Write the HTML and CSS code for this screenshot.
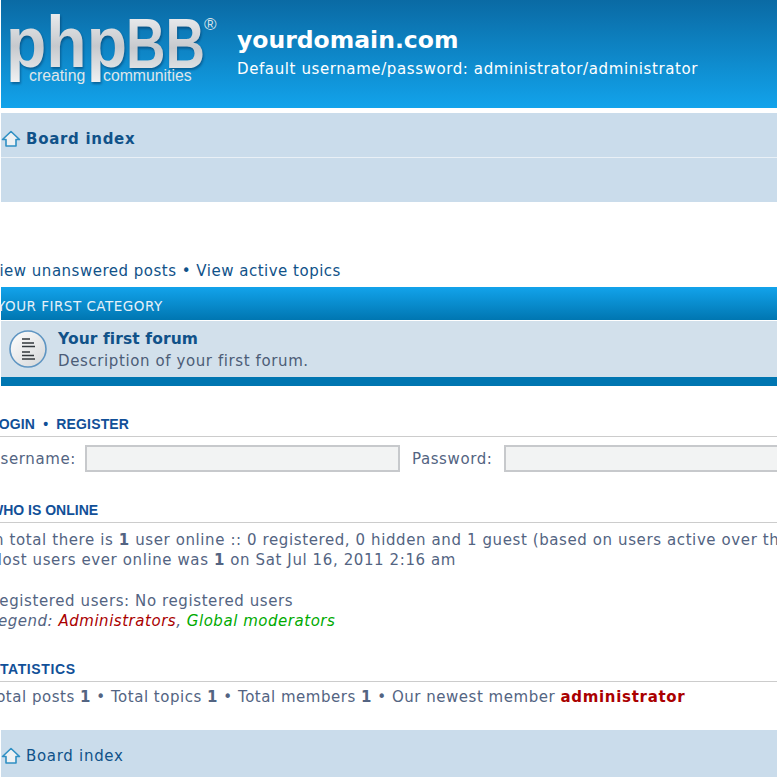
FILE: index.html
```html
<!DOCTYPE html>
<html lang="en">
<head>
    <title>yourdomain.com - Index page</title>
    <link rel="stylesheet" href="styles.css">
</head>
<body>
    <div class="headerbar">
        <svg class="logo" width="220" height="90" viewBox="0 0 220 90">
            <defs>
                <linearGradient id="logo_fill" x1="0" y1="0" x2="0" y2="1">
                    <stop offset="0" stop-color="#f6f7f8"/>
                    <stop offset="0.55" stop-color="#c6c9cd"/>
                    <stop offset="1" stop-color="#f0f1f2"/>
                </linearGradient>
            </defs>
            <text class="logo_word logo_lower" x="6" y="67" textLength="121" lengthAdjust="spacingAndGlyphs">php</text>
            <text class="logo_word logo_caps" x="126" y="68" textLength="79" lengthAdjust="spacingAndGlyphs">BB</text>
            <text class="logo_reg" x="204" y="30">®</text>
            <text class="logo_tag" x="29" y="81">creating</text>
            <text class="logo_tag" x="103" y="81">communities</text>
        </svg>
        <div class="site_desc">
            <h1>yourdomain.com</h1>
            <p>Default username/password: administrator/administrator</p>
        </div>
    </div>

    <div class="navbar">
        <div class="nav_row">
            <svg class="home_icon" width="20" height="18" viewBox="0 0 20 18"><path d="M10 1.5 L18.5 9.500 H15 V16 H5 V9.500 H1.500 Z" fill="#eef1f3" stroke="#2f8fc4" stroke-width="1.6" stroke-linejoin="round"/></svg>
            <a class="crumb" href="#">Board index</a>
        </div>
        <div class="nav_row nav_empty"></div>
    </div>

    <p class="search_links"><a href="#">View unanswered posts</a> • <a href="#">View active topics</a></p>

    <div class="forabg">
        <div class="cat_title">YOUR FIRST CATEGORY</div>
        <div class="forum_row">
            <svg class="forum_icon" width="40" height="40" viewBox="0 0 40 40">
                <defs>
                    <linearGradient id="icon_fill" x1="0" y1="0" x2="1" y2="1">
                        <stop offset="0" stop-color="#ffffff"/>
                        <stop offset="1" stop-color="#d4d6d8"/>
                    </linearGradient>
                </defs>
                <circle cx="20" cy="20" r="18" fill="url(#icon_fill)" stroke="#5f95c2" stroke-width="1.6"/>
                <path d="M14 10h8M14 14h12M14 17.500h13M14 23h8M14 26.500h12M14 30h13" stroke="#33383d" stroke-width="1.6"/>
            </svg>
            <div class="forum_text">
                <a class="forum_title" href="#">Your first forum</a>
                <div class="forum_desc">Description of your first forum.</div>
            </div>
        </div>
        <div class="forabg_foot"></div>
    </div>

    <h3 class="sect sect_login"><a href="#">LOGIN</a> &nbsp;•&nbsp; <a href="#">REGISTER</a></h3>
    <div class="login_row">
        <label for="username">Username:</label>
        <input type="text" id="username" class="inputbox">
        <label for="password" class="pass_label">Password:</label>
        <input type="text" id="password" class="inputbox">
    </div>

    <h3 class="sect sect_online">WHO IS ONLINE</h3>
    <p class="body_text">In total there is <b>1</b> user online :: 0 registered, 0 hidden and 1 guest (based on users active over the past 5 minutes)<br>
    Most users ever online was <b>1</b> on Sat Jul 16, 2011 2:16 am</p>
    <p class="body_text reg_users">Registered users: No registered users<br>
    <em class="legend">Legend: <a class="admin" href="#">Administrators</a>, <a class="mod" href="#">Global moderators</a></em></p>

    <h3 class="sect sect_stats">STATISTICS</h3>
    <p class="body_text stats_text">Total posts <b>1</b> • Total topics <b>1</b> • Total members <b>1</b> • Our newest member <a class="newest" href="#">administrator</a></p>

    <div class="navbar nav_foot">
        <div class="nav_row">
            <svg class="home_icon" width="20" height="18" viewBox="0 0 20 18"><path d="M10 1.5 L18.5 9.500 H15 V16 H5 V9.500 H1.500 Z" fill="#eef1f3" stroke="#2f8fc4" stroke-width="1.6" stroke-linejoin="round"/></svg>
            <a class="crumb crumb_plain" href="#">Board index</a>
        </div>
    </div>
</body>
</html>
```
FILE: styles.css
```css
html, body {
    margin: 0;
    padding: 0;
    overflow: hidden;
    height: 777px;
}
body {
    font-family: "DejaVu Sans", Verdana, sans-serif;
    font-size: 15px;
    line-height: 20px;
    letter-spacing: 0.6px;
    color: #536482;
    background-color: #fff;
}
a {
    color: #105289;
    text-decoration: none;
}
.headerbar {
    display: flex;
    height: 108px;
    margin-left: 1px;
    background: linear-gradient(to bottom, #0a6aa4, #12a3eb);
    color: #fff;
}
.logo {
    margin-left: -1px;
    letter-spacing: 0;
}
.logo_word {
    font-family: "Liberation Sans", Arial, sans-serif;
    font-weight: bold;
    fill: url(#logo_fill);
    filter: drop-shadow(1px 2px 1px rgba(0, 40, 80, 0.45));
}
.logo_lower {
    font-size: 72px;
}
.logo_caps {
    font-size: 70px;
}
.logo_reg {
    font-family: "Liberation Sans", Arial, sans-serif;
    font-size: 17px;
    fill: #d8e2e8;
}
.logo_tag {
    font-family: "Liberation Sans", Arial, sans-serif;
    font-size: 15.800px;
    fill: #dfe6ea;
}
.site_desc {
    margin-left: 17px;
    padding-top: 25px;
}
.site_desc h1 {
    margin: 0;
    font-size: 23.500px;
    line-height: 30px;
    letter-spacing: 0;
}
.site_desc p {
    margin: 4px 0 0;
}
.navbar {
    margin: 5px 0 0 1px;
    background-color: #cadceb;
}
.nav_row {
    display: flex;
    align-items: center;
    height: 44px;
    box-sizing: border-box;
    padding-top: 8px;
}
.nav_empty {
    height: 45px;
    border-top: 1px solid #e9f0f6;
}
.home_icon {
    margin-right: 5px;
}
.crumb {
    font-weight: bold;
    letter-spacing: 0.7px;
}
.crumb_plain {
    font-weight: normal;
}
.search_links {
    margin: 59px 0 0 -11px;
    letter-spacing: 0.5px;
    color: #105289;
}
.forabg {
    margin: 6px 0 0 1px;
}
.cat_title {
    height: 33px;
    font-size: 13.500px;
    line-height: 38px;
    letter-spacing: 0.5px;
    text-indent: -4px;
    color: #e5f1f9;
    background: linear-gradient(to bottom, #12a3eb, #0076b1);
}
.forum_row {
    display: flex;
    align-items: center;
    height: 56px;
    margin-top: 1px;
    background-color: #d2e0eb;
}
.forum_icon {
    margin: 0 10px 0 7px;
}
.forum_text {
    padding-top: 2px;
}
.forum_title {
    display: block;
    font-size: 15.500px;
    font-weight: bold;
    letter-spacing: 0.1px;
}
.forum_desc {
    margin-top: 2px;
    color: #4c5d77;
}
.forabg_foot {
    height: 9px;
    background-color: #0076b1;
}
.sect {
    margin: 0 0 0 -10px;
    font-family: "Liberation Sans", Arial, sans-serif;
    font-size: 14px;
    line-height: 24px;
    letter-spacing: 0;
    color: #115098;
    border-bottom: 1px solid #ccc;
}
.sect a {
    color: #115098;
}
.sect_login {
    margin-top: 26px;
    letter-spacing: 0.15px;
}
.sect_online {
    margin-top: 26px;
}
.sect_stats {
    margin-top: 26px;
    letter-spacing: 0.6px;
}
.login_row {
    display: flex;
    align-items: center;
    margin: 8px 0 0 -11px;
    width: 1000px;
}
.inputbox {
    box-sizing: border-box;
    width: 315px;
    height: 27px;
    margin-left: 9px;
    background-color: #f2f3f3;
    border: 2px solid #c7c9cc;
}
.pass_label {
    margin-left: 12px;
    margin-right: 3px;
}
.body_text {
    margin: 7px 0 0 -11px;
    white-space: nowrap;
}
.reg_users {
    margin-top: 21px;
}
.legend {
    letter-spacing: 0.53px;
}
.stats_text {
    margin-top: 5px;
    letter-spacing: 0.52px;
}
.admin {
    color: #aa0000;
}
.mod {
    color: #00aa00;
}
.newest {
    color: #aa0000;
    font-weight: bold;
    letter-spacing: 0.7px;
}
.nav_foot {
    margin-top: 23px;
}
.nav_foot .nav_row {
    height: 47px;
    padding-top: 5px;
}
```
